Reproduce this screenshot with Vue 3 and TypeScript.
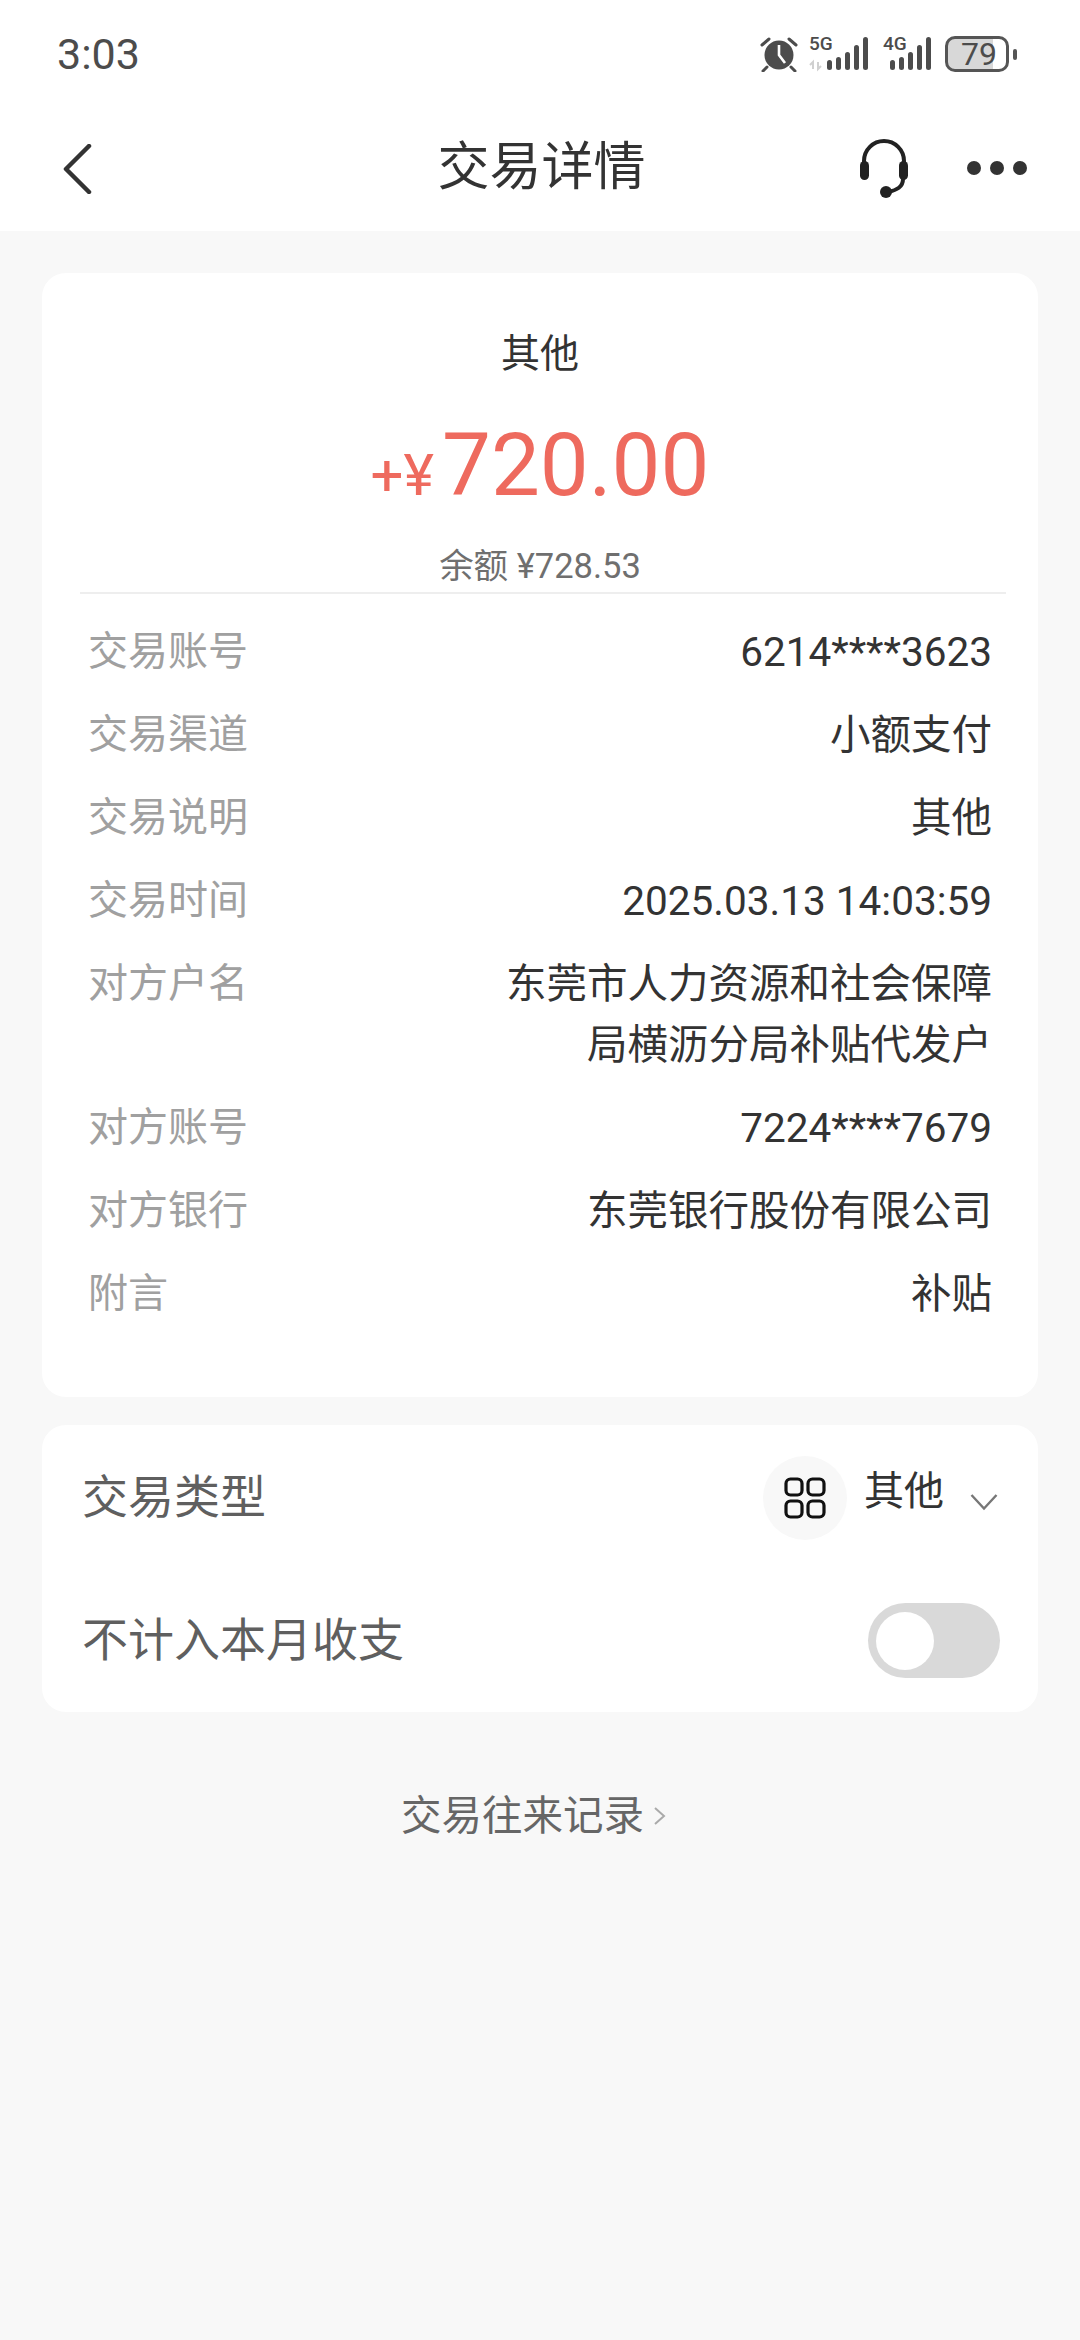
<script setup lang="ts">
interface DetailRow {
  label: string;
  value: string[];
}

const rows: DetailRow[] = [
  { label: '交易账号', value: ['6214****3623'] },
  { label: '交易渠道', value: ['小额支付'] },
  { label: '交易说明', value: ['其他'] },
  { label: '交易时间', value: ['2025.03.13 14:03:59'] },
  { label: '对方户名', value: ['东莞市人力资源和社会保障', '局横沥分局补贴代发户'] },
  { label: '对方账号', value: ['7224****7679'] },
  { label: '对方银行', value: ['东莞银行股份有限公司'] },
  { label: '附言', value: ['补贴'] }
];

const signalBars = [
  { x: 0, y: 24, h: 10 },
  { x: 9, y: 21, h: 13 },
  { x: 18, y: 16, h: 18 },
  { x: 27, y: 9, h: 25 },
  { x: 36, y: 1, h: 33 }
];
</script>

<template>
  <div class="page">
    <header class="top">
      <div class="status">
        <span class="time">3:03</span>
        <div class="status-icons">
          <svg class="alarm" width="38" height="36" viewBox="0 0 38 36">
            <circle cx="19" cy="19" r="14.5" fill="#4c4c4c" />
            <path d="M19 9v10l6 8" fill="none" stroke="#fff" stroke-width="2.6" />
            <path d="M2 9l7-6M36 9l-7-6M7 31l-4 4M31 31l4 4" stroke="#4c4c4c" stroke-width="3" fill="none" stroke-linecap="round" />
          </svg>
          <svg class="signal" width="62" height="42" viewBox="0 -6 62 42">
            <text x="0" y="14" class="net">5G</text>
            <path d="M4 33v-7l-3 3M9 26v7l3-3" stroke="#d0d0d0" stroke-width="2" fill="none" />
            <rect v-for="b in signalBars" :key="b.x" :x="b.x + 18" :y="b.y" width="5" :height="b.h" rx="2.5" fill="#4c4c4c" />
          </svg>
          <svg class="signal" width="50" height="42" viewBox="0 -6 50 42">
            <text x="0" y="14" class="net">4G</text>
            <rect v-for="b in signalBars" :key="b.x" :x="b.x + 7" :y="b.y" width="5" :height="b.h" rx="2.5" fill="#4c4c4c" />
          </svg>
          <div class="battery">
            <div class="battery-body"><span>79</span></div>
            <i class="battery-tip"></i>
          </div>
        </div>
      </div>
      <nav class="nav">
        <svg class="back" width="30" height="50" viewBox="0 0 30 50">
          <path d="M27 2L4 25l23 23" fill="none" stroke="#333" stroke-width="4.5" stroke-linecap="round" stroke-linejoin="round" />
        </svg>
        <h1 class="title">交易详情</h1>
        <div class="nav-right">
          <svg width="54" height="60" viewBox="0 0 54 60">
            <path d="M7 28v-6a20 20 0 0 1 40 0v6" fill="none" stroke="#222" stroke-width="4" />
            <rect x="3" y="22" width="9" height="19" rx="4.5" fill="#222" />
            <rect x="42" y="22" width="9" height="19" rx="4.5" fill="#222" />
            <path d="M46 40c0 8-6 11-15 13" fill="none" stroke="#222" stroke-width="4" />
            <circle cx="29" cy="53" r="6" fill="#222" />
          </svg>
          <div class="dots"><i></i><i></i><i></i></div>
        </div>
      </nav>
    </header>

    <main class="content">
      <section class="card summary">
        <div class="kind">其他</div>
        <div class="amount"><span class="sign">+¥</span><span class="num">720.00</span></div>
        <div class="balance">余额 ¥728.53</div>
        <div class="divider"></div>
        <dl class="details">
          <div v-for="row in rows" :key="row.label" class="row">
            <dt>{{ row.label }}</dt>
            <dd>
              <div v-for="line in row.value" :key="line">{{ line }}</div>
            </dd>
          </div>
        </dl>
      </section>

      <section class="card options">
        <div class="option">
          <span class="option-label">交易类型</span>
          <div class="picker">
            <div class="picker-icon">
              <svg width="42" height="42" viewBox="0 0 42 42">
                <rect x="2" y="2" width="16" height="16" rx="4.5" fill="none" stroke="#111" stroke-width="3.2" />
                <rect x="24" y="2" width="16" height="16" rx="4.5" fill="none" stroke="#111" stroke-width="3.2" />
                <rect x="2" y="24" width="16" height="16" rx="4.5" fill="none" stroke="#111" stroke-width="3.2" />
                <rect x="24" y="24" width="16" height="16" rx="4.5" fill="none" stroke="#111" stroke-width="3.2" />
              </svg>
            </div>
            <span class="picker-text">其他</span>
            <svg class="caret" width="28" height="18" viewBox="0 0 28 18">
              <path d="M1.500 2L14 15.500 26.500 2" fill="none" stroke="#777" stroke-width="2.4" />
            </svg>
          </div>
        </div>
        <div class="option">
          <span class="option-label">不计入本月收支</span>
          <div class="toggle"><i></i></div>
        </div>
      </section>

      <div class="records">
        <span>交易往来记录</span>
        <svg width="14" height="22" viewBox="0 0 14 22">
          <path d="M2 3l9 8-9 8" fill="none" stroke="#aaa" stroke-width="2" />
        </svg>
      </div>
    </main>
  </div>
</template>

<style>
html,
body {
  margin: 0;
  background: #f8f8f8;
}
</style>

<style scoped>
.page {
  width: 1080px;
  min-height: 2340px;
  background: #f8f8f8;
  font-family: Roboto, "Noto Sans CJK SC", sans-serif;
  color: #333;
}

.top {
  background: #fff;
  height: 231px;
}

.status {
  height: 108px;
  padding: 0 63px 0 57px;
  display: flex;
  align-items: center;
  justify-content: space-between;
}

.time {
  font-size: 43px;
  color: #4c4c4c;
}

.status-icons {
  display: flex;
  align-items: center;
}

.alarm {
  margin-right: 11px;
}

.signal {
  margin-right: 12px;
  margin-top: -6px;
}

.net {
  font-family: Roboto, sans-serif;
  font-size: 19px;
  font-weight: 500;
  fill: #4c4c4c;
}

.battery {
  display: flex;
  align-items: center;
  gap: 4px;
}

.battery-body {
  width: 64px;
  height: 36px;
  box-sizing: border-box;
  border: 3px solid #555;
  border-radius: 10px;
  background: linear-gradient(90deg, #d8d8d8 78%, #fff 78%);
  font-size: 32px;
  line-height: 30px;
  color: #4c4c4c;
  padding-left: 13px;
}

.battery-tip {
  width: 4px;
  height: 11px;
  border-radius: 2px;
  background: #555;
}

.nav {
  height: 122px;
  padding: 0 53px 0 62px;
  display: grid;
  grid-template-columns: 1fr auto 1fr;
  align-items: center;
}

.title {
  margin: 0 6px 14px 0;
  font-size: 52px;
  font-weight: 400;
  color: #333;
}

.nav-right {
  display: flex;
  justify-content: flex-end;
  align-items: center;
  gap: 56px;
}

.dots {
  display: flex;
  gap: 9px;
  margin-bottom: 2px;
}

.dots i {
  width: 14px;
  height: 14px;
  border-radius: 50%;
  background: #333;
}

.content {
  padding: 42px 42px 0;
}

.card {
  background: #fff;
  border-radius: 24px;
}

.summary {
  height: 1124px;
  box-sizing: border-box;
  padding-top: 58px;
}

.kind {
  text-align: center;
  font-size: 39px;
  line-height: 46px;
}

.amount {
  margin-top: 38px;
  height: 100px;
  display: flex;
  justify-content: center;
  align-items: baseline;
  color: #ee6a5e;
  line-height: 100px;
}

.sign {
  font-size: 58px;
  margin-right: 8px;
}

.num {
  font-size: 87px;
}

.balance {
  margin-top: 29px;
  text-align: center;
  font-size: 34.5px;
  line-height: 44px;
  color: #6f6f6f;
}

.divider {
  height: 2px;
  margin: 4px 32px 0 38px;
  background: #eee;
}

.details {
  margin: 28px 46px 0;
  display: flex;
  flex-direction: column;
  gap: 22px;
}

.row {
  display: flex;
  justify-content: space-between;
  font-size: 40px;
  line-height: 60px;
}

dt {
  color: #a0a0a0;
}

dd {
  margin: 0;
  text-align: right;
  color: #333;
  font-size: 40.5px;
  line-height: 61px;
}

.options {
  margin-top: 28px;
  height: 287px;
  box-sizing: border-box;
  padding: 0 38px 0 40px;
  padding-top: 1px;
}

.option {
  height: 143px;
  display: flex;
  justify-content: space-between;
  align-items: center;
}

.option-label {
  font-size: 46px;
  color: #5f5f5f;
  padding-bottom: 10px;
}

.picker {
  display: flex;
  align-items: center;
}

.picker-icon {
  width: 84px;
  height: 84px;
  border-radius: 50%;
  background: #f8f8f8;
  display: flex;
  align-items: center;
  justify-content: center;
}

.picker-text {
  margin-left: 17px;
  font-size: 40px;
  line-height: 46px;
  color: #333;
  padding-bottom: 12px;
}

.caret {
  margin-left: 26px;
  margin-right: 2px;
  margin-top: 8px;
}

.toggle {
  width: 132px;
  height: 75px;
  border-radius: 38px;
  background: #d9d9d9;
  display: flex;
  align-items: center;
  padding-left: 8px;
  box-sizing: border-box;
}

.toggle i {
  width: 58px;
  height: 58px;
  border-radius: 50%;
  background: #fff;
}

.records {
  margin-top: 74px;
  padding-right: 12px;
  display: flex;
  justify-content: center;
  align-items: center;
  gap: 9px;
  font-size: 40.5px;
  line-height: 60px;
  color: #666;
}
</style>
